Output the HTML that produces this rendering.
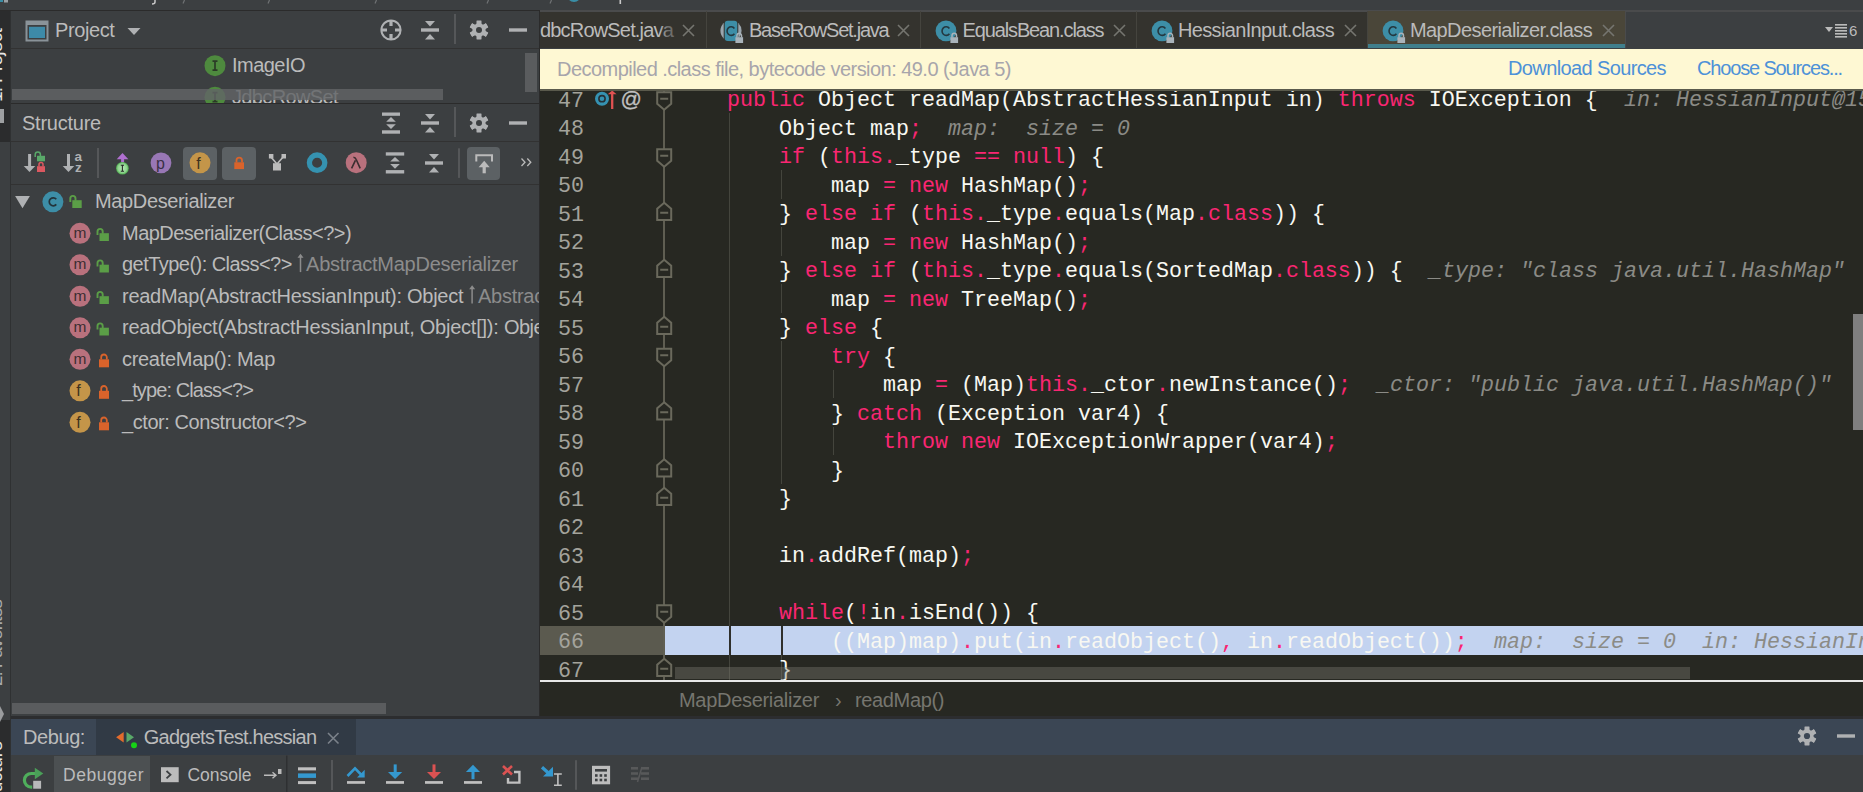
<!DOCTYPE html>
<html><head><meta charset="utf-8">
<style>
*{margin:0;padding:0;box-sizing:border-box}
html,body{width:1863px;height:792px;overflow:hidden;background:#3c3f41;font-family:"Liberation Sans",sans-serif;font-size:19px;color:#bbbbbb}
.a{position:absolute}
.t{position:absolute;white-space:pre;line-height:1}
svg{position:absolute;overflow:visible}
.cl{position:absolute;white-space:pre;font-family:"Liberation Mono",monospace;font-size:21.667px;line-height:28.5px;height:28.5px;padding-top:2.5px;color:#f8f8f2}
.k{color:#f92672}
.h{color:#8b8b86;font-style:italic}
.ln{position:absolute;left:18px;width:26px;text-align:right;white-space:pre;font-family:"Liberation Mono",monospace;font-size:21.667px;line-height:28.5px;height:28.5px;padding-top:3px;color:#a3a39c}
.g{position:absolute;width:1px;background:#44453d}
.fo{fill:#272822;stroke:#6a695c;stroke-width:2}
.fm{fill:none;stroke:#6a695c;stroke-width:2}
</style></head><body>
<!-- top strip -->
<div class="a" style="left:0;top:0;width:1863px;height:10px;background:#3c3f41"></div>
<div class="a" style="left:0;top:10px;width:1863px;height:1px;background:#2b2b2b"></div>

<!-- left tool stripe -->
<div class="a" style="left:0;top:11px;width:10px;height:781px;background:#3c3f41"></div>
<div class="a" style="left:0;top:11px;width:10px;height:131px;background:#2b2c2d"></div>
<div class="a" style="left:0;top:720px;width:10px;height:72px;background:#2b2c2d"></div>
<div class="a" style="left:10px;top:11px;width:1px;height:781px;background:#2f3132"></div>

<!-- left panel -->
<div id="left" class="a" style="left:11px;top:11px;width:528px;height:705px;background:#3c3f41">

</div>
<div class="a" style="left:539px;top:11px;width:1px;height:705px;background:#2b2b2b"></div>

<!-- editor -->
<div id="tabs" class="a" style="left:540px;top:11px;width:1323px;height:38px;background:#3c3f41">

</div>
<div id="banner" class="a" style="left:540px;top:49px;width:1323px;height:40px;background:#fef8d3">

</div>
<div class="a" style="left:540px;top:89px;width:1323px;height:2px;background:#5a5a4c"></div>
<div id="code" class="a" style="left:540px;top:91px;width:1323px;height:589px;background:#272822;overflow:hidden">
<div class="a" style="left:0;top:535.0px;width:125px;height:29px;background:#5b5a4f"></div>
<div class="a" style="left:125px;top:535.0px;width:1198px;height:29px;background:#c3d3f0"></div>
<div class="g" style="left:189px;top:22.0px;height:595.6500000000002px"></div>
<div class="g" style="left:241px;top:79.0px;height:28.5px"></div>
<div class="g" style="left:241px;top:136.0px;height:28.5px"></div>
<div class="g" style="left:241px;top:193.0px;height:28.5px"></div>
<div class="g" style="left:241px;top:250.0px;height:142.5px"></div>
<div class="g" style="left:293px;top:278.5px;height:28.5px"></div>
<div class="g" style="left:293px;top:335.5px;height:28.5px"></div>
<div class="g" style="left:241px;top:535.0px;height:82.6500000000002px"></div>
<div class="a" style="left:189px;top:535.0px;width:2px;height:29px;background:#2f2f2c"></div>
<div class="a" style="left:241px;top:535.0px;width:2px;height:29px;background:#2f2f2c"></div>
<div class="a" style="left:123.20000000000005px;top:0;width:2px;height:589px;background:#5f5e52"></div>
<svg width="1323" height="589" style="left:0;top:0"><path d="M117.20000000000005,1.25 H131.20000000000005 V12.75 L124.20000000000005,18.75 L117.20000000000005,12.75 Z" class="fo"/>
<path d="M120.20000000000005,7.75 H128.20000000000005" class="fm"/>
<path d="M117.20000000000005,58.25 H131.20000000000005 V69.75 L124.20000000000005,75.75 L117.20000000000005,69.75 Z" class="fo"/>
<path d="M120.20000000000005,64.75 H128.20000000000005" class="fm"/>
<path d="M117.20000000000005,257.75 H131.20000000000005 V269.25 L124.20000000000005,275.25 L117.20000000000005,269.25 Z" class="fo"/>
<path d="M120.20000000000005,264.25 H128.20000000000005" class="fm"/>
<path d="M117.20000000000005,514.25 H131.20000000000005 V525.75 L124.20000000000005,531.75 L117.20000000000005,525.75 Z" class="fo"/>
<path d="M120.20000000000005,520.75 H128.20000000000005" class="fm"/>
<path d="M117.20000000000005,129.0 H131.20000000000005 V117.75 L124.20000000000005,111.75 L117.20000000000005,117.75 Z" class="fo"/>
<path d="M120.20000000000005,121.75 H128.20000000000005" class="fm"/>
<path d="M117.20000000000005,186.0 H131.20000000000005 V174.75 L124.20000000000005,168.75 L117.20000000000005,174.75 Z" class="fo"/>
<path d="M120.20000000000005,178.75 H128.20000000000005" class="fm"/>
<path d="M117.20000000000005,243.0 H131.20000000000005 V231.75 L124.20000000000005,225.75 L117.20000000000005,231.75 Z" class="fo"/>
<path d="M120.20000000000005,235.75 H128.20000000000005" class="fm"/>
<path d="M117.20000000000005,328.5 H131.20000000000005 V317.25 L124.20000000000005,311.25 L117.20000000000005,317.25 Z" class="fo"/>
<path d="M120.20000000000005,321.25 H128.20000000000005" class="fm"/>
<path d="M117.20000000000005,385.5 H131.20000000000005 V374.25 L124.20000000000005,368.25 L117.20000000000005,374.25 Z" class="fo"/>
<path d="M120.20000000000005,378.25 H128.20000000000005" class="fm"/>
<path d="M117.20000000000005,414.0 H131.20000000000005 V402.75 L124.20000000000005,396.75 L117.20000000000005,402.75 Z" class="fo"/>
<path d="M120.20000000000005,406.75 H128.20000000000005" class="fm"/>
<path d="M117.20000000000005,585.0 H131.20000000000005 V573.75 L124.20000000000005,567.75 L117.20000000000005,573.75 Z" class="fo"/>
<path d="M120.20000000000005,577.75 H128.20000000000005" class="fm"/></svg>
<div class="cl" style="top:-6.5px;left:187px"><span class="k">public</span><span class="n"> Object readMap(AbstractHessianInput in) </span><span class="k">throws</span><span class="n"> IOException {</span></div>
<div class="cl h" style="top:-6.5px;left:1084px">in: HessianInput@15f4a1</div>
<div class="ln" style="top:-6.5px">47</div>
<div class="cl" style="top:22.0px;left:239px"><span class="n">Object map</span><span class="k">;</span></div>
<div class="cl h" style="top:22.0px;left:408px">map:  size = 0</div>
<div class="ln" style="top:22.0px">48</div>
<div class="cl" style="top:50.5px;left:239px"><span class="k">if</span><span class="n"> (</span><span class="k">this.</span><span class="n">_type </span><span class="k">==</span><span class="n"> </span><span class="k">null</span><span class="n">) {</span></div>
<div class="ln" style="top:50.5px">49</div>
<div class="cl" style="top:79.0px;left:291px"><span class="n">map </span><span class="k">=</span><span class="n"> </span><span class="k">new</span><span class="n"> HashMap()</span><span class="k">;</span></div>
<div class="ln" style="top:79.0px">50</div>
<div class="cl" style="top:107.5px;left:239px"><span class="n">} </span><span class="k">else if</span><span class="n"> (</span><span class="k">this.</span><span class="n">_type</span><span class="k">.</span><span class="n">equals(Map</span><span class="k">.class</span><span class="n">)) {</span></div>
<div class="ln" style="top:107.5px">51</div>
<div class="cl" style="top:136.0px;left:291px"><span class="n">map </span><span class="k">=</span><span class="n"> </span><span class="k">new</span><span class="n"> HashMap()</span><span class="k">;</span></div>
<div class="ln" style="top:136.0px">52</div>
<div class="cl" style="top:164.5px;left:239px"><span class="n">} </span><span class="k">else if</span><span class="n"> (</span><span class="k">this.</span><span class="n">_type</span><span class="k">.</span><span class="n">equals(SortedMap</span><span class="k">.class</span><span class="n">)) {</span></div>
<div class="cl h" style="top:164.5px;left:889px">_type: &quot;class java.util.HashMap&quot;</div>
<div class="ln" style="top:164.5px">53</div>
<div class="cl" style="top:193.0px;left:291px"><span class="n">map </span><span class="k">=</span><span class="n"> </span><span class="k">new</span><span class="n"> TreeMap()</span><span class="k">;</span></div>
<div class="ln" style="top:193.0px">54</div>
<div class="cl" style="top:221.5px;left:239px"><span class="n">} </span><span class="k">else</span><span class="n"> {</span></div>
<div class="ln" style="top:221.5px">55</div>
<div class="cl" style="top:250.0px;left:291px"><span class="k">try</span><span class="n"> {</span></div>
<div class="ln" style="top:250.0px">56</div>
<div class="cl" style="top:278.5px;left:343px"><span class="n">map </span><span class="k">=</span><span class="n"> (Map)</span><span class="k">this.</span><span class="n">_ctor</span><span class="k">.</span><span class="n">newInstance()</span><span class="k">;</span></div>
<div class="cl h" style="top:278.5px;left:837px">_ctor: &quot;public java.util.HashMap()&quot;</div>
<div class="ln" style="top:278.5px">57</div>
<div class="cl" style="top:307.0px;left:291px"><span class="n">} </span><span class="k">catch</span><span class="n"> (Exception var4) {</span></div>
<div class="ln" style="top:307.0px">58</div>
<div class="cl" style="top:335.5px;left:343px"><span class="k">throw new</span><span class="n"> IOExceptionWrapper(var4)</span><span class="k">;</span></div>
<div class="ln" style="top:335.5px">59</div>
<div class="cl" style="top:364.0px;left:291px"><span class="n">}</span></div>
<div class="ln" style="top:364.0px">60</div>
<div class="cl" style="top:392.5px;left:239px"><span class="n">}</span></div>
<div class="ln" style="top:392.5px">61</div>
<div class="cl" style="top:421.0px;left:187px"></div>
<div class="ln" style="top:421.0px">62</div>
<div class="cl" style="top:449.5px;left:239px"><span class="n">in</span><span class="k">.</span><span class="n">addRef(map)</span><span class="k">;</span></div>
<div class="ln" style="top:449.5px">63</div>
<div class="cl" style="top:478.0px;left:187px"></div>
<div class="ln" style="top:478.0px">64</div>
<div class="cl" style="top:506.5px;left:239px"><span class="k">while</span><span class="n">(</span><span class="k">!</span><span class="n">in</span><span class="k">.</span><span class="n">isEnd()) {</span></div>
<div class="ln" style="top:506.5px">65</div>
<div class="cl" style="top:535.0px;left:291px"><span class="n">((Map)map)</span><span class="k">.</span><span class="n">put(in</span><span class="k">.</span><span class="n">readObject()</span><span class="k">,</span><span class="n"> in</span><span class="k">.</span><span class="n">readObject())</span><span class="k">;</span></div>
<div class="cl h" style="top:535.0px;left:954px">map:  size = 0  in: HessianInput@15f4a1</div>
<div class="ln" style="top:535.0px">66</div>
<div class="cl" style="top:563.5px;left:239px"><span class="n">}</span></div>
<div class="ln" style="top:563.5px">67</div>
<div class="a" style="left:135px;top:576px;width:1015px;height:12px;background:rgba(125,125,115,0.38)"></div>
<svg width="100" height="30" style="left:0;top:0">
<circle cx="62" cy="7.7" r="7" fill="#3592b2"/>
<circle cx="62" cy="7.7" r="3.1" fill="none" stroke="#253037" stroke-width="1.6"/>
<circle cx="62" cy="7.7" r="1" fill="#3592b2"/>
<path d="M72.2,18 V2.5" stroke="#e05252" stroke-width="2.3"/>
<path d="M67.8,3.3 L72.2,-0.5 L76.6,3.3 Z" fill="#e05252"/>
</svg>
<div class="t" style="left:80.5px;top:-3.5px;font-family:'Liberation Sans';font-size:21px;color:#c0c0c0;line-height:21px;-webkit-text-stroke:0.3px #c0c0c0">@</div>

</div>
<div class="a" style="left:540px;top:680px;width:1323px;height:2px;background:#e8e8e8"></div>
<div id="crumbs" class="a" style="left:540px;top:682px;width:1323px;height:34px;background:#272822">

</div>

<!-- debug panel -->
<div class="a" style="left:11px;top:716px;width:1852px;height:3px;background:#2c2d2f"></div>
<div id="dbghead" class="a" style="left:11px;top:719px;width:1852px;height:36px;background:#3b4654">

</div>
<div id="dbgbar" class="a" style="left:11px;top:755px;width:1852px;height:37px;background:#3c3f41">

</div>
<div class="a" style="left:540px;top:10px;width:1323px;height:2px;background:#4a4b4c;"></div>
<div class="a" style="left:540px;top:12px;width:1085px;height:36px;background:#34332e;"></div>
<div class="a" style="left:1625px;top:10px;width:1px;height:38px;background:#4a4b4c;"></div>
<div class="a" style="left:1368px;top:11px;width:257px;height:37px;background:#4a4639;"></div>
<div class="a" style="left:1368px;top:44px;width:257px;height:4px;background:#407f8c;"></div>
<div class="a" style="left:706px;top:11px;width:1px;height:37px;background:#45443e;"></div>
<div class="a" style="left:920px;top:11px;width:1px;height:37px;background:#45443e;"></div>
<div class="a" style="left:1136px;top:11px;width:1px;height:37px;background:#45443e;"></div>
<div class="a" style="left:1367px;top:11px;width:1px;height:37px;background:#45443e;"></div>
<svg style="left:0px;top:0px" width="1863" height="792"><circle cx="731" cy="30.8" r="10.6" fill="#9aa5ad"/><rect x="723.7" y="19.8" width="14.6" height="22" fill="#34332e"/><rect x="724.7" y="20.700000000000003" width="12.6" height="20.2" rx="3" fill="#3d8ea7"/><path d="M734.4,28.5 A4.1,4.3 0 1 0 734.4,33.7" fill="none" stroke="#243840" stroke-width="1.6"/><rect x="735.4" y="37.2" width="7.7" height="5.8" fill="#a9b3ba"/><path d="M737.0,37.5 V35.6 A2.25,2.25 0 0 1 741.5,35.6 V37.5" fill="none" stroke="#a9b3ba" stroke-width="1.5"/><circle cx="946" cy="30.8" r="10.4" fill="#3d8ea7"/><path d="M949.4,28.5 A4.1,4.3 0 1 0 949.4,33.7" fill="none" stroke="#243840" stroke-width="1.6"/><rect x="950.4" y="37.2" width="7.7" height="5.8" fill="#a9b3ba"/><path d="M952.0,37.5 V35.6 A2.25,2.25 0 0 1 956.5,35.6 V37.5" fill="none" stroke="#a9b3ba" stroke-width="1.5"/><circle cx="1162" cy="30.8" r="10.4" fill="#3d8ea7"/><path d="M1165.4,28.5 A4.1,4.3 0 1 0 1165.4,33.7" fill="none" stroke="#243840" stroke-width="1.6"/><rect x="1166.4" y="37.2" width="7.7" height="5.8" fill="#a9b3ba"/><path d="M1168.0,37.5 V35.6 A2.25,2.25 0 0 1 1172.5,35.6 V37.5" fill="none" stroke="#a9b3ba" stroke-width="1.5"/><circle cx="1393" cy="30.8" r="10.4" fill="#3d8ea7"/><path d="M1396.4,28.5 A4.1,4.3 0 1 0 1396.4,33.7" fill="none" stroke="#243840" stroke-width="1.6"/><rect x="1397.4" y="37.2" width="7.7" height="5.8" fill="#a9b3ba"/><path d="M1399.0,37.5 V35.6 A2.25,2.25 0 0 1 1403.5,35.6 V37.5" fill="none" stroke="#a9b3ba" stroke-width="1.5"/><path d="M683,25 L694,36 M694,25 L683,36" stroke="#75756f" stroke-width="1.6" fill="none"/><path d="M898,25 L909,36 M909,25 L898,36" stroke="#75756f" stroke-width="1.6" fill="none"/><path d="M1114,25 L1125,36 M1125,25 L1114,36" stroke="#75756f" stroke-width="1.6" fill="none"/><path d="M1345,25 L1356,36 M1356,25 L1345,36" stroke="#75756f" stroke-width="1.6" fill="none"/><path d="M1603,25 L1614,36 M1614,25 L1603,36" stroke="#75756f" stroke-width="1.6" fill="none"/></svg>
<div class="a" style="left:540px;top:12px;width:136px;height:36px;overflow:hidden"><div class="t" style="left:0px;top:7.57px;font-size:20px;color:#bbbbbb;letter-spacing:-0.824px;">dbcRowSet.java</div><div class="a" style="left:119px;top:0px;width:17px;height:36px;background:linear-gradient(90deg,rgba(52,51,46,0),rgba(52,51,46,0.55) 9px,rgba(52,51,46,0.6) 17px);"></div></div>
<div class="t" style="left:749px;top:19.57px;font-size:20px;color:#bbbbbb;letter-spacing:-1.225px;">BaseRowSet.java</div>
<div class="t" style="left:962.5px;top:19.57px;font-size:20px;color:#bbbbbb;letter-spacing:-1.125px;">EqualsBean.class</div>
<div class="t" style="left:1178px;top:19.57px;font-size:20px;color:#bbbbbb;letter-spacing:-0.660px;">HessianInput.class</div>
<div class="t" style="left:1410px;top:19.57px;font-size:20px;color:#bbbbbb;letter-spacing:-0.594px;">MapDeserializer.class</div>
<svg style="left:0px;top:0px" width="1863" height="792"><path d="M1825,27 H1833 L1829,32 Z" fill="#bbbbbb"/><rect x="1835" y="24" width="12" height="1.6" fill="#bbbbbb"/><rect x="1835" y="27" width="12" height="1.6" fill="#bbbbbb"/><rect x="1835" y="30" width="12" height="1.6" fill="#bbbbbb"/><rect x="1835" y="33" width="12" height="1.6" fill="#bbbbbb"/><rect x="1835" y="36" width="12" height="1.6" fill="#bbbbbb"/></svg>
<div class="t" style="left:1849px;top:23.30px;font-size:15px;color:#bbbbbb;">6</div>
<div class="t" style="left:557px;top:58.57px;font-size:20px;color:#a7a5ab;letter-spacing:-0.539px;">Decompiled .class file, bytecode version: 49.0 (Java 5)</div>
<div class="t" style="left:1508px;top:58.07px;font-size:20px;color:#4d91d8;letter-spacing:-0.617px;">Download Sources</div>
<div class="t" style="left:1697px;top:58.07px;font-size:20px;color:#4d91d8;letter-spacing:-1.151px;">Choose Sources...</div>
<div class="t" style="left:679px;top:689.57px;font-size:20px;color:#76766f;letter-spacing:-0.298px;">MapDeserializer</div>
<div class="t" style="left:835px;top:689.57px;font-size:20px;color:#76766f;">›</div>
<div class="t" style="left:855px;top:689.57px;font-size:20px;color:#76766f;letter-spacing:-0.361px;">readMap()</div>
<div class="a" style="left:11px;top:48px;width:528px;height:1px;background:#323232;"></div>
<svg style="left:0px;top:0px" width="1863" height="792"><rect x="26.5" y="21.5" width="21" height="19" fill="none" stroke="#8a9399" stroke-width="2"/><rect x="26" y="21" width="22" height="4" fill="#8a9399"/><rect x="28.5" y="26" width="17" height="13" fill="#3c3f41"/><rect x="29" y="26.8" width="16" height="11.2" fill="#3d8aa8"/><path d="M127.5,28 H140.5 L134,35 Z" fill="#afb1b3"/><circle cx="391" cy="30" r="9.6" fill="none" stroke="#afb1b3" stroke-width="2"/><path d="M391,20 V26 M391,34 V40 M381,30 H387 M395,30 H401" stroke="#afb1b3" stroke-width="3.2"/><rect x="421" y="28.3" width="18" height="3.4" fill="#afb1b3"/><path d="M425.0,21 H435.0 L430.0,26.4 Z" fill="#afb1b3"/><path d="M425.0,39.4 H435.0 L430.0,34 Z" fill="#afb1b3"/><rect x="454" y="14" width="2" height="30" fill="#555759"/><rect x="476.7" y="20.7" width="4.6" height="18.6" fill="#afb1b3" transform="rotate(0 479 30)"/><rect x="476.7" y="20.7" width="4.6" height="18.6" fill="#afb1b3" transform="rotate(60 479 30)"/><rect x="476.7" y="20.7" width="4.6" height="18.6" fill="#afb1b3" transform="rotate(120 479 30)"/><rect x="476.7" y="20.7" width="4.6" height="18.6" fill="#afb1b3" transform="rotate(180 479 30)"/><rect x="476.7" y="20.7" width="4.6" height="18.6" fill="#afb1b3" transform="rotate(240 479 30)"/><rect x="476.7" y="20.7" width="4.6" height="18.6" fill="#afb1b3" transform="rotate(300 479 30)"/><circle cx="479" cy="30" r="6.700000000000001" fill="#afb1b3"/><circle cx="479" cy="30" r="3.0" fill="#3c3f41"/><rect x="509" y="28.3" width="18" height="3.4" fill="#afb1b3"/></svg>
<div class="t" style="left:55px;top:20.07px;font-size:20px;color:#bbbbbb;letter-spacing:-0.393px;">Project</div>
<svg style="left:0px;top:0px" width="1863" height="792"><g opacity="1.0"><circle cx="215" cy="65.7" r="10.5" fill="#4e8a3e"/><path d="M212.5,61.2 H217.5 M215,61.2 V70.2 M212.5,70.2 H217.5" stroke="#2b3a26" stroke-width="1.7"/></g></svg>
<div class="t" style="left:232px;top:55.07px;font-size:20px;color:#bbbbbb;letter-spacing:-0.531px;">ImageIO</div>
<div class="a" style="left:11px;top:49px;width:528px;height:54px;overflow:hidden"><div class="t" style="left:221px;top:37.57px;font-size:20px;color:#bbbbbb;letter-spacing:-0.628px;">JdbcRowSet</div><svg style="left:0px;top:0px" width="1863" height="792"><g opacity="1.0"><circle cx="204" cy="48.2" r="10.5" fill="#4e8a3e"/><path d="M201.5,43.7 H206.5 M204,43.7 V52.7 M201.5,52.7 H206.5" stroke="#2b3a26" stroke-width="1.7"/></g></svg></div>
<div class="a" style="left:12px;top:89px;width:431px;height:11px;background:rgba(98,100,102,0.82);"></div>
<div class="a" style="left:525px;top:53px;width:12px;height:39px;background:#5a5c5e;"></div>
<div class="a" style="left:11px;top:103px;width:528px;height:1px;background:#2b2b2b;"></div>
<div class="t" style="left:22px;top:113.07px;font-size:20px;color:#bbbbbb;letter-spacing:-0.240px;">Structure</div>
<svg style="left:0px;top:0px" width="1863" height="792"><rect x="382" y="112.5" width="18" height="3.3" fill="#afb1b3"/><rect x="382" y="130.3" width="18" height="3.4" fill="#afb1b3"/><path d="M386.2,121.7 H395.8 L391.0,117.1 Z" fill="#afb1b3"/><path d="M386.2,124.3 H395.8 L391.0,128.9 Z" fill="#afb1b3"/><rect x="421" y="121.3" width="18" height="3.4" fill="#afb1b3"/><path d="M425.0,114 H435.0 L430.0,119.4 Z" fill="#afb1b3"/><path d="M425.0,132.4 H435.0 L430.0,127 Z" fill="#afb1b3"/><rect x="454" y="107" width="2" height="30" fill="#555759"/><rect x="476.7" y="113.7" width="4.6" height="18.6" fill="#afb1b3" transform="rotate(0 479 123)"/><rect x="476.7" y="113.7" width="4.6" height="18.6" fill="#afb1b3" transform="rotate(60 479 123)"/><rect x="476.7" y="113.7" width="4.6" height="18.6" fill="#afb1b3" transform="rotate(120 479 123)"/><rect x="476.7" y="113.7" width="4.6" height="18.6" fill="#afb1b3" transform="rotate(180 479 123)"/><rect x="476.7" y="113.7" width="4.6" height="18.6" fill="#afb1b3" transform="rotate(240 479 123)"/><rect x="476.7" y="113.7" width="4.6" height="18.6" fill="#afb1b3" transform="rotate(300 479 123)"/><circle cx="479" cy="123" r="6.700000000000001" fill="#afb1b3"/><circle cx="479" cy="123" r="3.0" fill="#3c3f41"/><rect x="509" y="121.3" width="18" height="3.4" fill="#afb1b3"/></svg>
<div class="a" style="left:11px;top:141px;width:528px;height:1px;background:#323232;"></div>
<div class="a" style="left:183px;top:146.5px;width:34px;height:33.5px;background:#5c6164;border-radius:4px;"></div>
<div class="a" style="left:222px;top:146.5px;width:34px;height:33.5px;background:#5c6164;border-radius:4px;"></div>
<div class="a" style="left:467px;top:146.5px;width:33px;height:33.5px;background:#5c6164;border-radius:4px;"></div>
<svg style="left:0px;top:0px" width="1863" height="792"><rect x="28.1" y="154" width="3" height="13" fill="#afb1b3"/><path d="M23.7,166 H35.3 L29.5,172 Z" fill="#afb1b3"/><rect x="37" y="155.8" width="8" height="5.5" fill="#59a869"/><path d="M35.2,157 V154.6 A2.6,2.6 0 0 1 40.4,154.6 V156" fill="none" stroke="#59a869" stroke-width="1.5"/><rect x="37" y="166.2" width="8" height="5.8" fill="#db5860"/><path d="M39,166.5 V164.6 A2,2 0 0 1 43,164.6 V166.5" fill="none" stroke="#db5860" stroke-width="1.5"/><rect x="67" y="154" width="3" height="13" fill="#afb1b3"/><path d="M62.7,166 H74.3 L68.5,172 Z" fill="#afb1b3"/><text x="74.6" y="161.2" font-family="Liberation Sans" font-weight="bold" font-size="13.5" fill="#afb1b3">a</text><text x="74.9" y="172.3" font-family="Liberation Sans" font-weight="bold" font-size="13.5" fill="#afb1b3">z</text><rect x="97" y="148" width="2" height="30" fill="#555759"/><path d="M116.7,159.2 L122.5,153 L128.4,159.2 Z" fill="#b070d0"/><rect x="121.1" y="158.5" width="3" height="4" fill="#b070d0"/><defs><radialGradient id="gi"><stop offset="0" stop-color="#b6eab6"/><stop offset="0.7" stop-color="#8fd48f"/><stop offset="1" stop-color="#4fae4f"/></radialGradient></defs><circle cx="122.4" cy="168.2" r="6.3" fill="url(#gi)"/><path d="M120.8,165.2 H124 M122.4,165.2 V171.2 M120.8,171.2 H124" stroke="#2a2a2a" stroke-width="1.1"/><circle cx="161" cy="162.8" r="10.4" fill="#9877b5"/><text x="156" y="168.5" font-family="Liberation Sans" font-size="16" fill="#3a3044">p</text><circle cx="200" cy="162.8" r="10.5" fill="#c49549"/><text x="196.2" y="168.6" font-family="Liberation Sans" font-size="16" fill="#3d3120">f</text><rect x="234.3" y="162.3" width="9.7" height="6.8" fill="#d9632b"/><path d="M236.5,162.6 V160.3 A2.75,2.75 0 0 1 242,160.3 V162.6" fill="none" stroke="#d9632b" stroke-width="1.8"/><path d="M270.5,156.5 L277,164 L283.5,156.5" fill="none" stroke="#bbbbbb" stroke-width="1.6"/><rect x="268.9" y="154" width="4.5" height="4.5" fill="#bbbbbb"/><rect x="281.5" y="154" width="4.5" height="4.5" fill="#bbbbbb"/><rect x="273" y="163.2" width="8" height="7.3" fill="#bbbbbb"/><circle cx="317.1" cy="162.7" r="7.7" fill="none" stroke="#3592b0" stroke-width="5.3"/><circle cx="356.2" cy="162.7" r="10.5" fill="#b9717d"/><path d="M351.6,168.3 L355.4,160.3 M353.4,157.2 Q355.3,157.2 356.2,159.5 L360.2,168.3" fill="none" stroke="#3b2d30" stroke-width="1.6"/><rect x="385.8" y="152.3" width="18.399999999999977" height="3.3" fill="#afb1b3"/><rect x="385.8" y="170.10000000000002" width="18.399999999999977" height="3.4" fill="#afb1b3"/><path d="M390.2,161.5 H399.8 L395.0,156.9 Z" fill="#afb1b3"/><path d="M390.2,164.10000000000002 H399.8 L395.0,168.70000000000002 Z" fill="#afb1b3"/><rect x="425" y="161.3" width="18" height="3.4" fill="#afb1b3"/><path d="M429.0,154 H439.0 L434.0,159.4 Z" fill="#afb1b3"/><path d="M429.0,172.4 H439.0 L434.0,167 Z" fill="#afb1b3"/><rect x="458" y="148.3" width="2" height="29.6" fill="#555759"/><path d="M476.3,161.4 V155.2 H492 V161.4" fill="none" stroke="#bbbbbb" stroke-width="2"/><path d="M478.6,167.3 L484.2,160.8 L489.7,167.3 Z" fill="#bbbbbb"/><rect x="482.6" y="166" width="3.2" height="7.3" fill="#bbbbbb"/><path d="M521.5,158.5 L525,162.2 L521.5,166 M527.3,158.5 L530.8,162.2 L527.3,166" fill="none" stroke="#bbbbbb" stroke-width="1.3"/></svg>
<div class="a" style="left:11px;top:183.5px;width:528px;height:1px;background:#323232;"></div>
<svg style="left:0px;top:0px" width="1863" height="792"><path d="M15.1,196 H29.9 L22.5,208.3 Z" fill="#afb1b3"/><circle cx="52.9" cy="201.8" r="10.5" fill="#3d8ea7"/><path d="M56.3,199.20000000000002 A4,4 0 1 0 56.3,204.4" fill="none" stroke="#23343b" stroke-width="1.7"/><rect x="72.3" y="200.20000000000002" width="9.4" height="7.8" fill="#5b9e47"/><path d="M70.3,202.0 V198.5 A2.6,2.6 0 0 1 75.5,198.5 V200.8" fill="none" stroke="#5b9e47" stroke-width="1.9"/><circle cx="80" cy="233.3" r="10.5" fill="#b9717d"/><text x="73.6" y="237.9" font-family="Liberation Sans" font-size="15.5" fill="#3b2d31">m</text><rect x="99.5" y="233.20000000000002" width="9.4" height="7.8" fill="#5b9e47"/><path d="M97.5,235.0 V231.5 A2.6,2.6 0 0 1 102.7,231.5 V233.8" fill="none" stroke="#5b9e47" stroke-width="1.9"/><circle cx="80" cy="264.8" r="10.5" fill="#b9717d"/><text x="73.6" y="269.40000000000003" font-family="Liberation Sans" font-size="15.5" fill="#3b2d31">m</text><rect x="99.5" y="264.7" width="9.4" height="7.8" fill="#5b9e47"/><path d="M97.5,266.5 V263.0 A2.6,2.6 0 0 1 102.7,263.0 V265.3" fill="none" stroke="#5b9e47" stroke-width="1.9"/><circle cx="80" cy="296.3" r="10.5" fill="#b9717d"/><text x="73.6" y="300.90000000000003" font-family="Liberation Sans" font-size="15.5" fill="#3b2d31">m</text><rect x="99.5" y="296.2" width="9.4" height="7.8" fill="#5b9e47"/><path d="M97.5,298.0 V294.5 A2.6,2.6 0 0 1 102.7,294.5 V296.8" fill="none" stroke="#5b9e47" stroke-width="1.9"/><circle cx="80" cy="327.8" r="10.5" fill="#b9717d"/><text x="73.6" y="332.40000000000003" font-family="Liberation Sans" font-size="15.5" fill="#3b2d31">m</text><rect x="99.5" y="327.7" width="9.4" height="7.8" fill="#5b9e47"/><path d="M97.5,329.5 V326.0 A2.6,2.6 0 0 1 102.7,326.0 V328.3" fill="none" stroke="#5b9e47" stroke-width="1.9"/><circle cx="80" cy="359.3" r="10.5" fill="#b9717d"/><text x="73.6" y="363.90000000000003" font-family="Liberation Sans" font-size="15.5" fill="#3b2d31">m</text><rect x="99" y="359.3" width="10" height="8" fill="#d9632b"/><path d="M101.2,359.6 V357.3 A2.8,2.8 0 0 1 106.8,357.3 V359.6" fill="none" stroke="#d9632b" stroke-width="1.8"/><circle cx="80" cy="390.8" r="10.5" fill="#c49549"/><text x="76.2" y="396.40000000000003" font-family="Liberation Sans" font-size="16" fill="#3d3120">f</text><rect x="99" y="390.8" width="10" height="8" fill="#d9632b"/><path d="M101.2,391.1 V388.8 A2.8,2.8 0 0 1 106.8,388.8 V391.1" fill="none" stroke="#d9632b" stroke-width="1.8"/><circle cx="80" cy="422.3" r="10.5" fill="#c49549"/><text x="76.2" y="427.90000000000003" font-family="Liberation Sans" font-size="16" fill="#3d3120">f</text><rect x="99" y="422.3" width="10" height="8" fill="#d9632b"/><path d="M101.2,422.6 V420.3 A2.8,2.8 0 0 1 106.8,420.3 V422.6" fill="none" stroke="#d9632b" stroke-width="1.8"/></svg>
<div class="t" style="left:95px;top:190.87px;font-size:20px;color:#bbbbbb;letter-spacing:-0.365px;">MapDeserializer</div>
<div class="a" style="left:11px;top:185px;width:528px;height:260px;overflow:hidden"><div class="t" style="left:111px;top:37.67px;font-size:20px;color:#bbbbbb;letter-spacing:-0.531px;">MapDeserializer(Class&lt;?&gt;)</div><div class="t" style="left:111px;top:69.17px;font-size:20px;color:#bbbbbb;letter-spacing:-0.539px;">getType(): Class&lt;?&gt; </div><svg style="left:0px;top:0px" width="528" height="260"><path d="M289.5,87.10000000000002 V70.60000000000002" stroke="#8c8c8c" stroke-width="1.5"/><path d="M286.5,72.70000000000002 L289.5,68.70000000000002 L292.5,72.70000000000002 Z" fill="#8c8c8c"/></svg><div class="t" style="left:295.09999999999997px;top:69.17px;font-size:20px;color:#8c8c8c;letter-spacing:-0.263px;">AbstractMapDeserializer</div><div class="t" style="left:111px;top:100.67px;font-size:20px;color:#bbbbbb;letter-spacing:-0.273px;">readMap(AbstractHessianInput): Object </div><svg style="left:0px;top:0px" width="528" height="260"><path d="M461.1,118.60000000000002 V102.10000000000002" stroke="#8c8c8c" stroke-width="1.5"/><path d="M458.1,104.20000000000002 L461.1,100.20000000000002 L464.1,104.20000000000002 Z" fill="#8c8c8c"/></svg><div class="t" style="left:467.0px;top:100.67px;font-size:20px;color:#8c8c8c;letter-spacing:-0.263px;">AbstractMapDeserializer</div><div class="t" style="left:111px;top:132.17px;font-size:20px;color:#bbbbbb;letter-spacing:-0.240px;">readObject(AbstractHessianInput, Object[]): </div><div class="t" style="left:492.9px;top:132.17px;font-size:20px;color:#bbbbbb;letter-spacing:-0.484px;">Object</div><div class="t" style="left:111px;top:163.67px;font-size:20px;color:#bbbbbb;letter-spacing:-0.303px;">createMap(): Map</div><div class="t" style="left:111px;top:195.17px;font-size:20px;color:#bbbbbb;letter-spacing:-0.904px;">_type: Class&lt;?&gt;</div><div class="t" style="left:111px;top:226.67px;font-size:20px;color:#bbbbbb;letter-spacing:-0.427px;">_ctor: Constructor&lt;?&gt;</div></div>
<div class="a" style="left:12px;top:703px;width:374px;height:11px;background:#5a5c5e;"></div>
<div class="a" style="left:95.5px;top:719px;width:260.5px;height:36px;background:#313a45;"></div>
<div class="t" style="left:23px;top:726.77px;font-size:20px;color:#bbbbbb;letter-spacing:-0.417px;">Debug:</div>
<div class="t" style="left:143.8px;top:726.77px;font-size:20px;color:#bbbbbb;letter-spacing:-0.753px;">GadgetsTest.hessian</div>
<svg style="left:0px;top:0px" width="1863" height="792"><path d="M123.7,732 V742.4 L116.1,737.2 Z" fill="#e26b2c"/><path d="M126.5,732 V742.4 L134,737.2 Z" fill="#59a869"/><circle cx="134" cy="745.2" r="3" fill="#16d116"/><path d="M328,733 L338.5,743.5 M338.5,733 L328,743.5" stroke="#7b828a" stroke-width="1.6" fill="none"/><rect x="1804.7" y="726.7" width="4.6" height="18.6" fill="#afb1b3" transform="rotate(0 1807 736)"/><rect x="1804.7" y="726.7" width="4.6" height="18.6" fill="#afb1b3" transform="rotate(60 1807 736)"/><rect x="1804.7" y="726.7" width="4.6" height="18.6" fill="#afb1b3" transform="rotate(120 1807 736)"/><rect x="1804.7" y="726.7" width="4.6" height="18.6" fill="#afb1b3" transform="rotate(180 1807 736)"/><rect x="1804.7" y="726.7" width="4.6" height="18.6" fill="#afb1b3" transform="rotate(240 1807 736)"/><rect x="1804.7" y="726.7" width="4.6" height="18.6" fill="#afb1b3" transform="rotate(300 1807 736)"/><circle cx="1807" cy="736" r="6.700000000000001" fill="#afb1b3"/><circle cx="1807" cy="736" r="3.1" fill="#3b4654"/><rect x="1837" y="734.3" width="18" height="3.4" fill="#afb1b3"/></svg>
<div class="a" style="left:53.6px;top:755.6px;width:96.4px;height:37px;background:#4c5052;"></div>
<div class="t" style="left:63px;top:767.49px;font-size:17.5px;color:#bbbbbb;letter-spacing:0.516px;">Debugger</div>
<div class="t" style="left:187.5px;top:767.49px;font-size:17.5px;color:#bbbbbb;letter-spacing:-0.031px;">Console</div>
<svg style="left:0px;top:0px" width="1863" height="792"><path d="M32.2,787.1 H31.2 A6.8,6.8 0 0 1 31.2,773.5 H35.5" fill="none" stroke="#4fae5c" stroke-width="3.2"/><path d="M34.8,767.7 L43.3,773.5 L34.8,779.2 Z" fill="#4a9f58"/><rect x="33.2" y="780.8" width="7.9" height="7.9" fill="#b8b9ba"/><rect x="161" y="767.2" width="17.7" height="15" fill="#bcbcbc"/><path d="M166.5,771 L170.5,774.7 L166.5,778.4" fill="none" stroke="#3c3f41" stroke-width="1.8"/><path d="M264,775.3 H276 M272.5,772.3 L276,775.3 L272.5,778.3" fill="none" stroke="#bbbbbb" stroke-width="1.4"/><rect x="278" y="769" width="3.5" height="5" fill="#bbbbbb"/><rect x="286" y="755.6" width="1.5" height="36.4" fill="#2e3032"/><rect x="298" y="767.3" width="18" height="3.1" fill="#c0c0c0"/><rect x="298" y="773.4" width="18" height="4.5" fill="#3498cf"/><rect x="298" y="781.1" width="18" height="3" fill="#c0c0c0"/><rect x="331" y="760" width="2" height="30" fill="#555759"/><path d="M347.5,776 L355,768.3 L362,775.5" fill="none" stroke="#3498cf" stroke-width="2.6"/><path d="M364.7,769.8 V777.4 H357 Z" fill="#3498cf"/><rect x="347" y="781.1" width="18" height="2.7" fill="#c0c0c0"/><rect x="393.7" y="764.4" width="3" height="9" fill="#3498cf"/><path d="M388,772.1 H402.2 L395.1,779 Z" fill="#3498cf"/><rect x="386" y="781.1" width="18" height="2.7" fill="#c0c0c0"/><rect x="432.5" y="764.4" width="3" height="9" fill="#db5252"/><path d="M427,772.1 H441 L434,779 Z" fill="#db5252"/><rect x="425" y="781.1" width="18" height="2.7" fill="#c0c0c0"/><path d="M465.9,772 H480 L473,764.8 Z" fill="#3498cf"/><rect x="471.5" y="771" width="3" height="8.2" fill="#3498cf"/><rect x="464" y="781.1" width="18" height="2.7" fill="#c0c0c0"/><path d="M508,778 V782.6 H519.4 V772 H514" fill="none" stroke="#c0c0c0" stroke-width="2.4"/><path d="M503,766 L512,774.5 M512,766 L503,774.5" stroke="#db5252" stroke-width="2.6"/><path d="M542,767.3 L549.5,774" stroke="#3498cf" stroke-width="3.3"/><path d="M543,776.6 H553 V766.8 Z" fill="#3498cf"/><path d="M554,774 H561.8 M557.9,774 V785.2 M554,785.2 H561.8" fill="none" stroke="#c0c0c0" stroke-width="1.6"/><rect x="575" y="760.2" width="2" height="29.6" fill="#555759"/><rect x="592" y="765.8" width="18.1" height="18.5" fill="#bdbdbd"/><rect x="595" y="769" width="12" height="2.6" fill="#3c3f41"/><rect x="595.0" y="774.2" width="2.6" height="2.6" fill="#3c3f41"/><rect x="599.6" y="774.2" width="2.6" height="2.6" fill="#3c3f41"/><rect x="604.2" y="774.2" width="2.6" height="2.6" fill="#3c3f41"/><rect x="595.0" y="778.7" width="2.6" height="2.6" fill="#3c3f41"/><rect x="599.6" y="778.7" width="2.6" height="2.6" fill="#3c3f41"/><rect x="604.2" y="778.7" width="2.6" height="2.6" fill="#3c3f41"/><rect x="631" y="767.0" width="7" height="2.6" fill="#58595a"/><rect x="641" y="767.0" width="8" height="2.6" fill="#58595a"/><rect x="631" y="772.2" width="7" height="2.6" fill="#58595a"/><rect x="641" y="772.2" width="8" height="2.6" fill="#58595a"/><rect x="631" y="777.4" width="7" height="2.6" fill="#58595a"/><rect x="641" y="777.4" width="8" height="2.6" fill="#58595a"/><path d="M637.5,782 L642,767" stroke="#58595a" stroke-width="1.5"/></svg>
<div class="a" style="left:1853px;top:314px;width:10px;height:116px;background:#7f7f7f;"></div>
<div class="a" style="left:0;top:11px;width:10px;height:781px;overflow:hidden">
<div class="t" style="left:-13.88px;top:91px;font-size:19px;color:#e6e6e6;letter-spacing:-0.725px;transform-origin:0 0;transform:rotate(-90deg) translate(0,0)">1: Project</div>
<div class="a" style="left:0px;top:98px;width:4px;height:14px;background:#9ea0a2;"></div>
<div class="t" style="left:-13.88px;top:675px;font-size:19px;color:#a8aaac;letter-spacing:-1.104px;transform-origin:0 0;transform:rotate(-90deg) translate(0,0)">2: Favorites</div>
<svg style="left:0;top:0" width="10" height="781"><path d="M-4,684 L0,695 L4,703 L0,711 Z" fill="#9a9c9e"/></svg>
<div class="t" style="left:-13.88px;top:825px;font-size:19px;color:#e6e6e6;letter-spacing:-0.267px;transform-origin:0 0;transform:rotate(-90deg) translate(0,0)">7: Structure</div>
</div>
<svg style="left:0px;top:0px" width="1863" height="11"><path d="M184.5,0 L183,3.5" stroke="#6f7274" stroke-width="1.2"/><path d="M269.5,0 L268,3.5" stroke="#6f7274" stroke-width="1.2"/><path d="M376.5,0 L375,3.5" stroke="#6f7274" stroke-width="1.2"/><path d="M488.5,0 L487,3.5" stroke="#6f7274" stroke-width="1.2"/><path d="M551.5,0 L550,3.5" stroke="#6f7274" stroke-width="1.2"/><circle cx="574" cy="-5" r="7" fill="#3a8ea6"/><path d="M155,0 V2 Q155,4 152,4" fill="none" stroke="#c9c9c9" stroke-width="1.5"/><rect x="619.5" y="0" width="1.6" height="4" fill="#c9c9c9"/><rect x="0" y="0" width="3" height="2" fill="#3a8ea6"/><rect x="4" y="0" width="4" height="2.5" fill="#9aa0a4"/></svg>
</body></html>
